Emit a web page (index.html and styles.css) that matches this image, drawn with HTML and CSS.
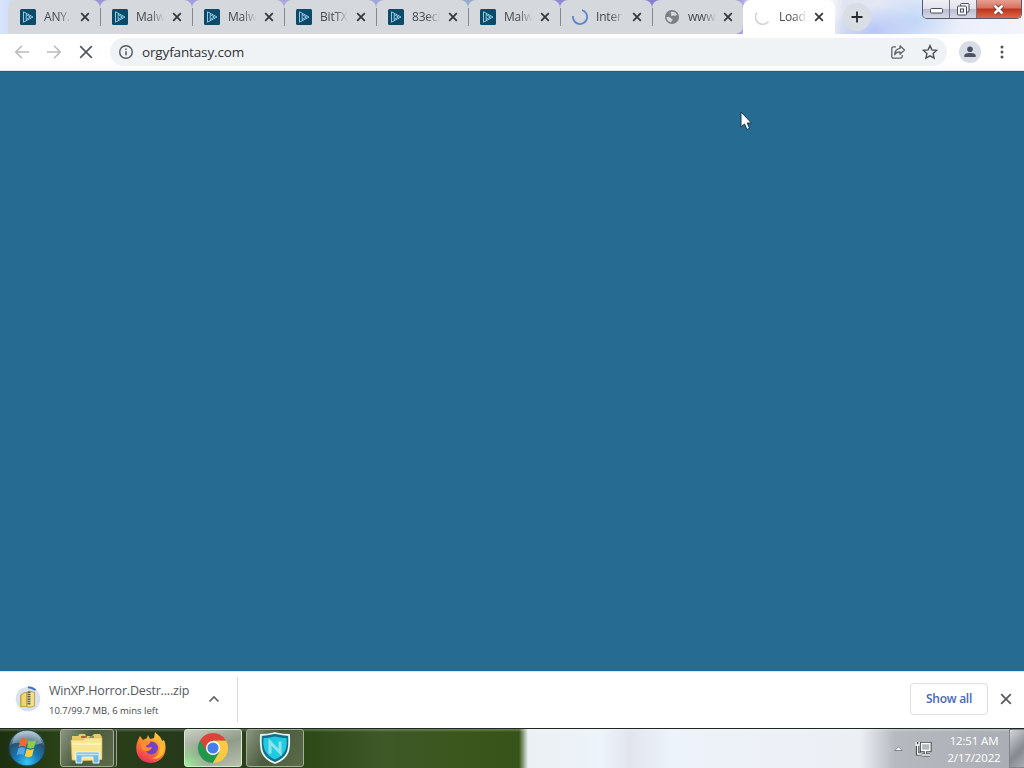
FILE: index.html
```html
<!DOCTYPE html>
<html lang="en">
<head>
    <meta charset="UTF-8">
    <meta name="viewport" content="width=device-width, initial-scale=1.0">
    <title>orgyfantasy.com</title>
    <link rel="stylesheet" href="styles.css">
</head>
<body>
    <!-- shared icons -->
    <svg class="defs" width="0" height="0">
        <symbol id="anyrun" viewBox="0 0 16 16">
            <rect width="16" height="16" rx="1.5" fill="#0d4a68"/>
            <path d="M3.500 2.800v10.400L13 8 3.500 2.800M6.200 4.500v7M6.500 5.800L10.500 8l-4 2.200" fill="none" stroke="#8fcbe8" stroke-width="1"/>
        </symbol>
        <symbol id="close" viewBox="0 0 10 10">
            <path d="M1.200 1.200l7.600 7.600M8.800 1.200L1.200 8.800" fill="none" stroke="#35383d" stroke-width="1.800"/>
        </symbol>
    </svg>

    <div class="tab-strip">
        <div class="tab"><svg class="favicon"><use href="#anyrun"/></svg><span class="title">ANY.</span><svg class="tab-close"><use href="#close"/></svg></div>
        <div class="tab"><svg class="favicon"><use href="#anyrun"/></svg><span class="title">Malw</span><svg class="tab-close"><use href="#close"/></svg></div>
        <div class="tab"><svg class="favicon"><use href="#anyrun"/></svg><span class="title">Malw</span><svg class="tab-close"><use href="#close"/></svg></div>
        <div class="tab"><svg class="favicon"><use href="#anyrun"/></svg><span class="title">BitTX</span><svg class="tab-close"><use href="#close"/></svg></div>
        <div class="tab"><svg class="favicon"><use href="#anyrun"/></svg><span class="title">83eci</span><svg class="tab-close"><use href="#close"/></svg></div>
        <div class="tab"><svg class="favicon"><use href="#anyrun"/></svg><span class="title">Malw</span><svg class="tab-close"><use href="#close"/></svg></div>
        <div class="tab">
            <svg class="favicon" viewBox="0 0 16 16"><path d="M10 1.100A7.100 7.100 0 1 1 1 7" fill="none" stroke="#5c83cf" stroke-width="1.800"/></svg>
            <span class="title">Inter</span><svg class="tab-close"><use href="#close"/></svg>
        </div>
        <div class="tab last">
            <svg class="favicon" viewBox="0 0 16 16">
                <circle cx="8" cy="8" r="7" fill="#7c7f84"/>
                <path d="M2.500 8c2-.3 4 0 4.500 1.200.3.800 1.600.5 1.700 1.500.1.900-1.300 1-1.500 2.500C4.500 13 2.500 11 2.500 8zM7 3c2.200-1 4.800.2 6 2.500-.8 1.500-2 1.500-3 1-1-.4-1.500.8-2.700.5C6.300 6.700 8 5.500 7.300 5 6.500 4.500 6.300 3.800 7 3z" fill="#d5d8dc"/>
            </svg>
            <span class="title">www.</span><svg class="tab-close"><use href="#close"/></svg>
        </div>
        <div class="tab active">
            <svg class="favicon" viewBox="0 0 16 16"><path d="M2 3.500A7 7 0 0 0 13.500 12.500" fill="none" stroke="#d3d5d9" stroke-width="1.600"/></svg>
            <span class="title">Load</span><svg class="tab-close"><use href="#close"/></svg>
        </div>
        <div class="new-tab">
            <svg width="12" height="12" viewBox="0 0 12 12"><path d="M6 .5v11M.5 6h11" stroke="#27292d" stroke-width="1.800"/></svg>
        </div>
        <div class="window-buttons">
            <div class="wbtn minimize"><svg width="13" height="6"><rect x=".5" y=".5" width="12" height="4.500" rx="1" fill="#fff" stroke="#4b4e5b"/></svg></div>
            <div class="wbtn restore"><svg width="13" height="13" viewBox="0 0 13 13"><g fill="#f4f5f8" stroke="#4b4e5b"><rect x="3.500" y=".5" width="8.500" height="8.500" rx="1"/><rect x=".5" y="3" width="9" height="9" rx="1"/><rect x="3.500" y="6" width="3" height="3"/></g></svg></div>
            <div class="wbtn quit"><svg width="13" height="11" viewBox="0 0 13 11"><path d="M2.500 1.500l8 8M10.500 1.500l-8 8" stroke="#6c2d30" stroke-width="4.200"/><path d="M2.500 1.500l8 8M10.500 1.500l-8 8" stroke="#fff" stroke-width="2.600"/></svg></div>
        </div>
    </div>

    <div class="toolbar">
        <svg class="nav" viewBox="0 0 16 16"><path d="M15 8H2M8 1.800L1.800 8 8 14.200" fill="none" stroke="#b9bbbe" stroke-width="1.600"/></svg>
        <svg class="nav" viewBox="0 0 16 16"><path d="M1 8h13M8 1.800L14.200 8 8 14.200" fill="none" stroke="#b9bbbe" stroke-width="1.600"/></svg>
        <svg class="nav" viewBox="0 0 16 16"><path d="M2.200 2.200l11.600 11.600M13.800 2.200L2.200 13.800" fill="none" stroke="#54575b" stroke-width="1.700"/></svg>
        <div class="omnibox">
            <svg width="16" height="16" viewBox="0 0 16 16"><circle cx="8" cy="8" r="6.300" fill="none" stroke="#55585d" stroke-width="1.400"/><path d="M8 7.200v4M8 4.400v1.500" stroke="#55585d" stroke-width="1.500"/></svg>
            <span class="url">orgyfantasy.com</span>
            <svg class="share" width="16" height="16" viewBox="0 0 16 16"><g fill="none" stroke="#5f6368" stroke-width="1.300" stroke-linejoin="round"><path d="M6 2.800H3.500a1.700 1.700 0 0 0-1.700 1.700v8a1.700 1.700 0 0 0 1.700 1.700h7a1.700 1.700 0 0 0 1.700-1.700V11"/><path d="M10 1.800L14.500 6 10 10.200V7.900C7.300 7.800 5.700 8.800 4.600 10.800 4.900 7.400 6.500 4.800 10 4.400z"/></g></svg>
            <svg width="16" height="16" viewBox="0 0 16 16"><path d="M8 1.600l1.900 4.300 4.700.5-3.500 3.200 1 4.600L8 11.800l-4.100 2.400 1-4.600L1.400 6.400l4.700-.5z" fill="none" stroke="#4c4f54" stroke-width="1.400"/></svg>
        </div>
        <div class="avatar"><svg width="12" height="12" viewBox="0 0 12 12"><circle cx="6" cy="3.200" r="2.800" fill="#4b5263"/><path d="M.3 11V9.500C.3 7.800 3 7 6 7s5.700.8 5.700 2.500V11z" fill="#4b5263"/></svg></div>
        <svg class="kebab" width="4" height="14" viewBox="0 0 4 14"><g fill="#505358"><circle cx="2" cy="2" r="1.500"/><circle cx="2" cy="7" r="1.500"/><circle cx="2" cy="12" r="1.500"/></g></svg>
    </div>

    <div class="page">
        <svg class="cursor" width="13" height="20" viewBox="0 0 13 20"><path d="M1 1v15l3.500-3 2.500 5.500 2.600-1.200L7.200 12H11.500z" fill="#fff" stroke="#123650"/></svg>
    </div>

    <div class="downloads">
        <svg class="zip" width="26" height="26" viewBox="0 0 26 26">
            <circle cx="13" cy="13" r="12.300" fill="#d9e0f1"/>
            <path d="M13 1.200A11.800 11.800 0 0 1 20.500 4" fill="none" stroke="#3d70cb" stroke-width="2"/>
            <path d="M5 9l4-2.500V20l-4 1z" fill="#d7b53d"/>
            <path d="M6 9l3.500-2.500H12v14H6z" fill="#edd675" stroke="#ab8c30" stroke-width=".7"/>
            <path d="M12 6.500l2.500-1.500 5 1.500V20L16 21h-4z" fill="#f2df88" stroke="#ab8c30" stroke-width=".7"/>
            <path d="M14 5.500v13" stroke="#595c62" stroke-width="2.800" stroke-dasharray="1.500 .8"/>
        </svg>
        <div class="file">
            <div class="file-name">WinXP.Horror.Destr....zip</div>
            <div class="file-status">10.7/99.7 MB, 6 mins left</div>
        </div>
        <svg class="chevron" width="12" height="8" viewBox="0 0 12 8"><path d="M1.500 6.500L6 2l4.500 4.500" fill="none" stroke="#606367" stroke-width="1.700"/></svg>
        <div class="divider"></div>
        <div class="show-all">Show all</div>
        <svg class="bar-close" width="12" height="12" viewBox="0 0 12 12"><path d="M1.200 1.200l9.600 9.600M10.800 1.200l-9.600 9.600" stroke="#56595d" stroke-width="1.700"/></svg>
    </div>

    <div class="taskbar">
        <svg class="start" width="38" height="38" viewBox="0 0 38 38">
            <defs>
                <radialGradient id="orb" cx=".5" cy=".9" r=".85"><stop offset="0" stop-color="#35c9f5"/><stop offset=".4" stop-color="#1878b2"/><stop offset=".75" stop-color="#285170"/><stop offset="1" stop-color="#9ab4bf"/></radialGradient>
            </defs>
            <circle cx="19" cy="19" r="18" fill="url(#orb)" stroke="#203f50"/>
            <path d="M4 15C6 5 13 2 19 2s13 3 15 12c-10 5-20-3-30 1z" fill="#d7e8eb" opacity=".4"/>
            <path d="M12.500 10.500c2.500-1.700 4.800-1.500 7 0L17.800 18c-2.300-1.500-4.500-1.500-7 0z" fill="#f06a2d"/>
            <path d="M20.700 11.200c2.400 1.300 4.600 1.500 7.300 0l-1.800 7.300c-2.700 1.500-4.900 1.300-7.200 0z" fill="#8ccb48"/>
            <path d="M10.400 19.300c2.500-1.500 4.700-1.500 7 0l-1.800 7c-2.300-1.500-4.500-1.400-7 0z" fill="#55a5e8"/>
            <path d="M18.700 19.800c2.500 1.300 4.600 1.500 7.200 0l-1.800 7.300c-2.600 1.500-4.900 1.400-7.200 0z" fill="#fbd03f"/>
        </svg>
        <div class="task stacked">
            <svg width="34" height="32" viewBox="0 0 34 32">
                <path d="M2 4h6l1.500-2H15l1 2h6l2-2h6l2 3v23H2z" fill="#e8c968"/>
                <path d="M4 3h4M12 5h5M20 5h4" stroke="#4f8a4d" stroke-width="1.600"/>
                <path d="M11 5h5" stroke="#cf4335" stroke-width="1.500"/><path d="M19 6h5" stroke="#3a80c7" stroke-width="1.500"/>
                <path d="M1 8h12l2-2h17v21c-9 2-22 2-30 1z" fill="#f9e690" stroke="#d5b55c" stroke-width=".6"/>
                <path d="M2 12h29" stroke="#fff5c5" stroke-width="1.500"/>
                <path d="M6 31V20h23v11h-6v-6H12v6z" fill="#6eb9ea" stroke="#e5f6fd"/>
                <path d="M7 22.500h21" stroke="#c0e8fb" stroke-width="1.500"/>
            </svg>
        </div>
        <div class="task plain">
            <svg width="32" height="32" viewBox="0 0 32 32">
                <defs><linearGradient id="fox" x1=".8" y1="0" x2=".3" y2="1"><stop offset="0" stop-color="#ffdf43"/><stop offset=".45" stop-color="#ff8c27"/><stop offset="1" stop-color="#ed2c5b"/></linearGradient></defs>
                <path d="M3 8l2-4 3 4 4-2 1-3 2 4 4-1 1-6c2 3 6 4 7 9l2-1c5 12-2 23-13 23C4 31-2 20 3 8z" fill="url(#fox)"/>
                <circle cx="16.500" cy="16" r="6.500" fill="#7440c8"/>
                <path d="M6 10c3-2 6 0 9 0 0 3-4 2.500-4 4.500 2 2 4 0 6 1-2 5-9 5-11-.5z" fill="#ff8c32"/>
                <path d="M20 5c4 4 6 9 4 15-1 4-4 6-8 6 9 3 15-4 13-13-1-4-4-6-5-8z" fill="#ffb836"/>
            </svg>
        </div>
        <div class="task current">
            <svg width="32" height="32" viewBox="0 0 32 32">
                <path d="M3 8.500A15 15 0 0 0 16 31l6.500-11.300L16 16z" fill="#22984f"/>
                <path d="M29 8.500A15 15 0 0 1 16 31l6.500-11.300L16 8.500z" fill="#fcca42"/>
                <path d="M3 8.500A15 15 0 0 1 29 8.500H16L10 19.500z" fill="#db4437"/>
                <circle cx="16" cy="16" r="7" fill="#fff"/><circle cx="16" cy="16" r="5.600" fill="#4480e8"/>
            </svg>
        </div>
        <div class="task shield">
            <svg width="32" height="32" viewBox="0 0 32 32">
                <path d="M2 3c5 0 8-.5 14-2 6 1.500 9 2 14 2 1 14 0 23-14 28C2 26 1 17 2 3z" fill="#126f86" stroke="#e4f5f5" stroke-width="1.800"/>
                <path d="M4.500 6c5 0 7.500-.7 11.500-1.500C20 5.300 22.500 6 27.500 6c1 10-1 17-11.500 21.500C6 23 3.500 16 4.500 6z" fill="#1fcbe3"/>
                <path d="M11 21.500V10L21 20.500V9.500" fill="none" stroke="#8ce3ec" stroke-width="3"/>
            </svg>
        </div>
        <div class="tray">
            <svg width="9" height="5" viewBox="0 0 9 5"><path d="M.8 4.500L4.500 .8l3.700 3.700z" fill="#fff" stroke="#5f646a" stroke-width=".7"/></svg>
            <svg class="network" width="17" height="16" viewBox="0 0 17 16">
                <g fill="none" stroke="#41464c" stroke-width="3.200"><path d="M6.500 2.500h8.500v7H6.500zM2.500 1v3.500M2.500 5v8h4M10.500 10v3M7 14h8"/></g>
                <path d="M6.500 2.500h8.500v7H6.500z" fill="#b5b9be"/>
                <g fill="none" stroke="#fff" stroke-width="1.300"><path d="M6.500 2.500h8.500v7H6.500zM1.200 1v3h2.800V1M2.600 4v9h4M10.500 10v3M7 14h8"/></g>
            </svg>
            <div class="clock">12:51 AM<br>2/17/2022</div>
            <div class="show-desktop"></div>
        </div>
    </div>
</body>
</html>
```
FILE: styles.css
```css
* {
    margin: 0;
    padding: 0;
    box-sizing: border-box;
}

body {
    width: 1024px;
    height: 768px;
    overflow: hidden;
    display: flex;
    flex-direction: column;
    font-family: 'Open Sans', 'Noto Sans', sans-serif;
    background: #fff;
}

svg {
    display: block;
    flex: none;
}

.defs {
    position: absolute;
}

.tab-strip {
    height: 34px;
    padding-left: 8px;
    display: flex;
    background:
        radial-gradient(ellipse 50px 25px at 874px 31px, #b8c6f7, transparent),
        radial-gradient(ellipse 45px 30px at 915px 20px, #c2d8f8, transparent),
        linear-gradient(90deg, #d7e4fb 0, #cbd9f5 20px, #9995d7 100px, #aaa6df 280px, #91adcb 470px, #9187d4 560px, #8078d2 735px, #fff 755px, #fff 825px, #e0e3f0 845px, #e8edf9 920px, #f3f4fc 1024px);
}

.tab {
    position: relative;
    width: 92px;
    height: 34px;
    padding: 0 0 0 12px;
    display: flex;
    align-items: center;
    background: #d5d8dd;
    border-radius: 8px 8px 0 0;
}

/* separator between two background tabs */
.tab + .tab::before {
    content: "";
    position: absolute;
    left: 0;
    top: 8px;
    width: 1px;
    height: 18px;
    background: #85888e;
}

.tab.active::before {
    display: none;
}

.tab.last {
    width: 91px;
    border-bottom-right-radius: 8px;
}

.tab.active {
    background: #fff;
}

.favicon {
    width: 16px;
    height: 16px;
}

.title {
    width: 32px;
    margin-left: 8px;
    margin-right: 4px;
    white-space: nowrap;
    font-size: 12px;
    line-height: 18px;
    letter-spacing: -.2px;
    color: #45484d;
    -webkit-mask-image: linear-gradient(90deg, #000 45%, transparent 88%);
    mask-image: linear-gradient(90deg, #000 45%, transparent 88%);
}

.tab-close {
    width: 10px;
    height: 10px;
}

.tab.last .tab-close,
.tab.active .tab-close {
    margin-left: -1px;
}

.new-tab {
    width: 28px;
    height: 28px;
    margin: 3px 0 0 8px;
    border-radius: 50%;
    background: #d9dde4;
    display: flex;
    align-items: center;
    justify-content: center;
}

.window-buttons {
    margin-left: auto;
    margin-right: 2px;
    width: 100px;
    height: 19px;
    display: flex;
    border: 1px solid #59596b;
    border-top: 0;
    border-radius: 0 0 5px 5px;
    overflow: hidden;
}

.wbtn {
    width: 27px;
    display: flex;
    align-items: center;
    justify-content: center;
    border-right: 1px solid #737383;
    background: linear-gradient(#eeeef5 0, #e1e2ec 48%, #b9bdcf 50%, #d4d8e6);
}

.minimize {
    padding-top: 4px;
}

.wbtn.quit {
    flex: 1;
    padding-right: 2px;
    border-right: 0;
    background: linear-gradient(#e8a090 0, #d5715e 45%, #be321c 50%, #dc6a45);
}

.toolbar {
    height: 37px;
    padding: 0 20px 0 14px;
    display: flex;
    align-items: center;
    background: #fff;
    border-bottom: 1px solid #dfe8ed;
}

.nav {
    width: 16px;
    height: 16px;
    margin-right: 16px;
}

.omnibox {
    width: 837px;
    height: 28px;
    padding: 0 9px 0 8px;
    display: flex;
    align-items: center;
    border-radius: 14px;
    background: #f0f3f5;
}

.url {
    flex: 1;
    margin-left: 8px;
    font-size: 13.500px;
    line-height: 20px;
    letter-spacing: -.14px;
    color: #303236;
}

.share {
    margin-right: 16px;
}

.avatar {
    width: 22px;
    height: 22px;
    margin-left: 12px;
    border-radius: 50%;
    background: #d8dce4;
    display: flex;
    align-items: center;
    justify-content: center;
}

.kebab {
    margin-left: auto;
}

.page {
    position: relative;
    height: 600px;
    background: #266b91;
    border-top: 1px solid #1f6088;
}

.cursor {
    position: absolute;
    left: 740px;
    top: 39px;
}

.downloads {
    height: 57px;
    display: flex;
    align-items: center;
    padding: 0 12px 2px 15px;
    background: #fff;
    border-top: 1px solid #dce6ec;
}

.file {
    width: 142px;
    margin-left: 8px;
    padding-top: 4px;
    white-space: nowrap;
}

.file-name {
    font-size: 12.500px;
    line-height: 20px;
    letter-spacing: -.18px;
    color: #55585c;
}

.file-status {
    font-size: 9.500px;
    line-height: 20px;
    color: #45474a;
}

.chevron {
    margin-left: 17px;
}

.divider {
    width: 1px;
    height: 45px;
    margin-left: 17px;
    background: #d9dadc;
}

.show-all {
    width: 78px;
    height: 32px;
    margin-left: auto;
    border: 1px solid #dcdee1;
    border-radius: 4px;
    text-align: center;
    font-size: 12px;
    font-weight: 600;
    line-height: 29px;
    letter-spacing: -.25px;
    color: #4768b8;
}

.bar-close {
    margin-left: 12px;
}

.taskbar {
    height: 40px;
    display: flex;
    border-top: 1px solid #1d2820;
    background:
        linear-gradient(rgba(255, 255, 255, .28) 0, rgba(255, 255, 255, 0) 3px),
        linear-gradient(90deg, #1d3010 0, #2a4216 60px, #26391a 180px, #2e4a17 310px, #3e5827 380px, #3b571e 450px, #385319 519px, #eaf0f3 528px, #edf4fa 600px, #e2e5ed 630px, #edf3fa 670px, #eceff4 860px, #b6bac0 895px, #a9adb3 1024px);
}

.start {
    margin-left: 8px;
    margin-right: 14px;
}

.task {
    width: 58px;
    height: 38px;
    margin-right: 4px;
    display: flex;
    align-items: center;
    justify-content: center;
    border: 1px solid #a4ad98;
    border-radius: 3px;
    background: linear-gradient(120deg, #8b9681, #4a5b3c 45%, #5c6c4b);
}

.task.stacked {
    width: 54px;
    margin-right: 8px;
    box-shadow: 2px 0 0 #37452c, 3px 0 0 #9aa48e;
}

.task.plain {
    border-color: transparent;
    background: none;
}

.task.current {
    border-color: #d9e9d2;
    background: radial-gradient(circle at 0 100%, #9df19c, transparent 35%), linear-gradient(160deg, #cbd1c5, #909b88 50%, #b9c1b1);
}

.tray {
    margin-left: auto;
    display: flex;
    align-items: center;
}

.network {
    margin-left: 12px;
}

.clock {
    width: 56px;
    margin-left: 14px;
    text-align: center;
    font-size: 11.500px;
    line-height: 17px;
    letter-spacing: -.15px;
    color: #fff;
    white-space: nowrap;
}

.show-desktop {
    width: 15px;
    height: 39px;
    margin-left: 7px;
    border: 1px solid #81858b;
    border-right: 0;
    background: linear-gradient(135deg, #d3d5d8, #858990 60%, #aaaeb4);
}
```
